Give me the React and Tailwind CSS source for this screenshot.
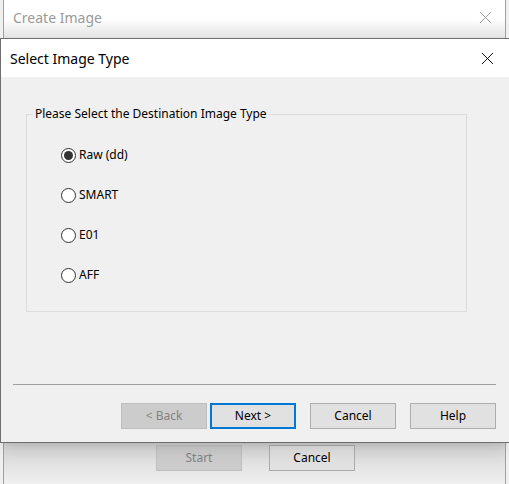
const font = { fontFamily: '"Noto Sans", "Liberation Sans", sans-serif' };

const CloseIcon = ({ className }) => (
    <svg viewBox="0 0 14 14" className={className} fill="none" stroke="currentColor" strokeWidth="1">
        <path d="M1 1L13 13M13 1L1 13" />
    </svg>
);

const Radio = ({ label, checked }) => (
    <label className="flex items-center gap-[3px] h-[20px] text-[12px] text-black">
        <span className="w-[15px] h-[15px] rounded-full border border-[#333333] bg-white flex items-center justify-center">
            {checked && <span className="w-[9px] h-[9px] rounded-full bg-[#333333]" />}
        </span>
        <span>{label}</span>
    </label>
);

const Button = ({ children, disabled, focused }) => (
    <button
        className={
            'w-[86px] h-[26px] text-[12px] ' +
            (disabled
                ? 'bg-[#cccccc] border border-[#bfbfbf] text-[#838383]'
                : focused
                ? 'bg-[#e1e1e1] border-2 border-[#0078d7] text-black'
                : 'bg-[#e1e1e1] border border-[#adadad] text-black')
        }
    >
        {children}
    </button>
);

const App = () => {
    return (
        <div className="relative w-[509px] h-[484px] overflow-hidden bg-[#f0f0f0]" style={font}>
            {/* background window */}
            <div className="h-full ml-[3px] mr-[3px] border-x border-[#a0a0a0] flex flex-col">
                <div className="h-[38px] bg-gradient-to-b from-white via-white to-[#e2e2e2] flex items-start justify-between pl-[9px] pr-[13px] pt-[7px]">
                    <span className="text-[14px] text-[#9a9a9a]">Create Image</span>
                    <CloseIcon className="w-[13px] h-[13px] mt-[4px] text-[#9a9a9a]" />
                </div>
                <div className="flex-1 flex flex-col justify-end">
                    <div className="h-[41px] bg-gradient-to-b from-[#d4d4d4] to-[#f0f0f0] flex items-start justify-center gap-[27px] pt-[2px] pl-[2px]">
                        <Button disabled>Start</Button>
                        <Button>Cancel</Button>
                    </div>
                </div>
            </div>

            {/* wizard dialog */}
            <div className="absolute left-0 right-0 top-[38px] h-[405px] border-t border-b border-l border-[#6e6e6e] flex flex-col shadow-lg">
                <div className="h-[38px] bg-white flex items-center justify-between pl-[9px] pr-[15px]">
                    <span className="text-[14px] text-black">Select Image Type</span>
                    <CloseIcon className="w-[13px] h-[13px] text-black" />
                </div>
                <div className="flex-1 bg-[#f0f0f0] flex flex-col px-[12px] pt-[28px]">
                    <fieldset className="ml-[13px] w-[441px] h-[207px] border border-[#dcdcdc]">
                        <legend className="ml-[6px] px-[2px] text-[12px] text-black">Please Select the Destination Image Type</legend>
                        <div className="flex flex-col gap-[20px] pl-[34px] pt-[22px]">
                            <Radio label="Raw (dd)" checked />
                            <Radio label="SMART" />
                            <Radio label="E01" />
                            <Radio label="AFF" />
                        </div>
                    </fieldset>
                    <div className="mt-[72px] h-px bg-[#a0a0a0] w-[483px]" />
                    <div className="mt-[18px] flex justify-end pr-[1px]">
                        <div className="flex gap-[3px]">
                            <Button disabled>&lt; Back</Button>
                            <Button focused>Next &gt;</Button>
                        </div>
                        <div className="flex gap-[14px] ml-[14px]">
                            <Button>Cancel</Button>
                            <Button>Help</Button>
                        </div>
                    </div>
                </div>
            </div>
        </div>
    );
};

export default App;
